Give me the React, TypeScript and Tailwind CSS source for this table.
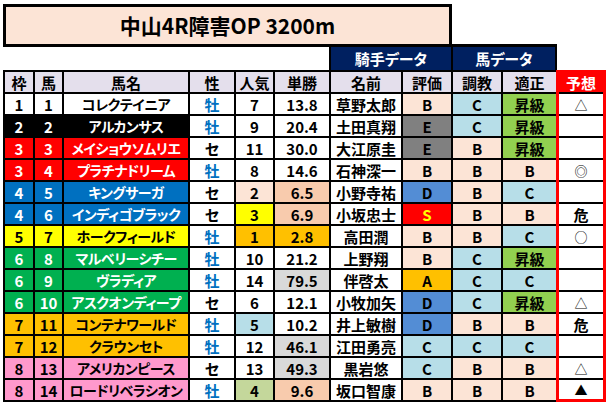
import React from "react"

type Horse = {
  w: number
  n: number
  name: string
  sex: string
  pop: number
  popBg: string
  odds: string
  oddsBg: string
  jockey: string
  hyoka: string
  chokyo: string
  tekisei: string
  yoso: string
}

const waku: Record<number, string> = {
  1: "bg-white text-black",
  2: "bg-black text-white",
  3: "bg-[#FF0000] text-white",
  4: "bg-[#0070C0] text-white",
  5: "bg-[#FFFF00] text-black",
  6: "bg-[#00B050] text-white",
  7: "bg-[#FFC000] text-black",
  8: "bg-[#FF99CC] text-black",
}

const grade: Record<string, string> = {
  A: "bg-[#FFC000]",
  B: "bg-[#FCE4D6]",
  C: "bg-[#B7DEE8]",
  D: "bg-[#538DD5]",
  E: "bg-[#808080]",
  S: "bg-[#FF0000] text-[#FFFF00]",
  昇級: "bg-[#92D050]",
}

const horses: Horse[] = [
  { w: 1, n: 1, name: "コレクテイニア", sex: "牡", pop: 7, popBg: "bg-white", odds: "13.8", oddsBg: "bg-white", jockey: "草野太郎", hyoka: "B", chokyo: "C", tekisei: "昇級", yoso: "△" },
  { w: 2, n: 2, name: "アルカンサス", sex: "牡", pop: 9, popBg: "bg-white", odds: "20.4", oddsBg: "bg-white", jockey: "土田真翔", hyoka: "E", chokyo: "C", tekisei: "昇級", yoso: "" },
  { w: 3, n: 3, name: "メイショウソムリエ", sex: "セ", pop: 11, popBg: "bg-white", odds: "30.0", oddsBg: "bg-white", jockey: "大江原圭", hyoka: "E", chokyo: "B", tekisei: "昇級", yoso: "" },
  { w: 3, n: 4, name: "プラチナドリーム", sex: "牡", pop: 8, popBg: "bg-white", odds: "14.6", oddsBg: "bg-white", jockey: "石神深一", hyoka: "B", chokyo: "B", tekisei: "B", yoso: "◎" },
  { w: 4, n: 5, name: "キングサーガ", sex: "セ", pop: 2, popBg: "bg-[#FCE4D6]", odds: "6.5", oddsBg: "bg-[#F8CBAD]", jockey: "小野寺祐", hyoka: "D", chokyo: "B", tekisei: "C", yoso: "" },
  { w: 4, n: 6, name: "インディゴブラック", sex: "セ", pop: 3, popBg: "bg-[#FFFF00]", odds: "6.9", oddsBg: "bg-[#F8CBAD]", jockey: "小坂忠士", hyoka: "S", chokyo: "B", tekisei: "B", yoso: "危" },
  { w: 5, n: 7, name: "ホークフィールド", sex: "牡", pop: 1, popBg: "bg-[#FFC000]", odds: "2.8", oddsBg: "bg-[#FFC000]", jockey: "高田潤", hyoka: "B", chokyo: "B", tekisei: "C", yoso: "○" },
  { w: 6, n: 8, name: "マルベリーシチー", sex: "牡", pop: 10, popBg: "bg-white", odds: "21.2", oddsBg: "bg-white", jockey: "上野翔", hyoka: "B", chokyo: "C", tekisei: "昇級", yoso: "" },
  { w: 6, n: 9, name: "ヴラディア", sex: "牡", pop: 14, popBg: "bg-white", odds: "79.5", oddsBg: "bg-[#D9D9D9]", jockey: "伴啓太", hyoka: "A", chokyo: "C", tekisei: "C", yoso: "" },
  { w: 6, n: 10, name: "アスクオンディープ", sex: "セ", pop: 6, popBg: "bg-white", odds: "12.1", oddsBg: "bg-white", jockey: "小牧加矢", hyoka: "D", chokyo: "C", tekisei: "昇級", yoso: "△" },
  { w: 7, n: 11, name: "コンテナワールド", sex: "牡", pop: 5, popBg: "bg-[#B7DEE8]", odds: "10.2", oddsBg: "bg-white", jockey: "井上敏樹", hyoka: "D", chokyo: "B", tekisei: "B", yoso: "危" },
  { w: 7, n: 12, name: "クラウンセト", sex: "牡", pop: 12, popBg: "bg-white", odds: "46.1", oddsBg: "bg-[#D9D9D9]", jockey: "江田勇亮", hyoka: "C", chokyo: "C", tekisei: "C", yoso: "" },
  { w: 8, n: 13, name: "アメリカンピース", sex: "セ", pop: 13, popBg: "bg-white", odds: "49.3", oddsBg: "bg-[#D9D9D9]", jockey: "黒岩悠", hyoka: "C", chokyo: "B", tekisei: "B", yoso: "△" },
  { w: 8, n: 14, name: "ロードリベラシオン", sex: "牡", pop: 4, popBg: "bg-[#C4D79B]", odds: "9.6", oddsBg: "bg-[#F8CBAD]", jockey: "坂口智康", hyoka: "B", chokyo: "B", tekisei: "B", yoso: "▲" },
]

const cell = "h-[22px] border-b-2 border-r-2 border-black flex items-center justify-center"
const last = "h-[22px] border-b-2 border-black flex items-center justify-center"
const head = "bg-[#E4DFEC]"

export default function App() {
  return (
    <div className="w-[610px] h-[407px] bg-white pt-[4px] pl-[3px] text-black font-bold text-[15px] leading-none font-['Noto_Sans_CJK_JP',sans-serif] [font-feature-settings:'palt']">
      {/* title */}
      <div className="w-[449px] h-[43px] border-[3px] border-black bg-[#FCE4D6] flex items-center justify-center text-[21px]">
        中山4R障害OP 3200m
      </div>

      {/* group headers */}
      <div className="flex -mt-[3px]">
        <div className="w-[326px]" />
        <div className="w-[122px] h-[26px] border-t-[3px] border-l-2 border-black bg-[#002060] text-white flex items-center justify-center">
          騎手データ
        </div>
        <div className="w-[106px] h-[26px] border-t-[3px] border-x-2 border-black bg-[#002060] text-white flex items-center justify-center">
          馬データ
        </div>
      </div>

      <div className="flex">
        <div className="grid grid-cols-[30px_29px_126px_46px_39px_56px_72px_50px_50px_53px] border-l-2 border-t-2 border-black">
          <div className={`${cell} ${head}`}>枠</div>
          <div className={`${cell} ${head}`}>馬</div>
          <div className={`${cell} ${head}`}>馬名</div>
          <div className={`${cell} ${head}`}>性</div>
          <div className={`${cell} ${head}`}>人気</div>
          <div className={`${cell} ${head}`}>単勝</div>
          <div className={`${cell} ${head}`}>名前</div>
          <div className={`${cell} ${head}`}>評価</div>
          <div className={`${cell} ${head}`}>調教</div>
          <div className={`${last} ${head}`}>適正</div>
          {horses.map((h) => (
            <React.Fragment key={h.n}>
              <div className={`${cell} ${waku[h.w]}`}>{h.w}</div>
              <div className={`${cell} ${waku[h.w]}`}>{h.n}</div>
              <div className={`${cell} ${waku[h.w]} whitespace-nowrap text-[14px] tracking-[-0.5px]`}>{h.name}</div>
              <div className={`${cell} bg-white ${h.sex === "牡" ? "text-[#0070C0]" : "text-black"}`}>{h.sex}</div>
              <div className={`${cell} ${h.popBg}`}>{h.pop}</div>
              <div className={`${cell} ${h.oddsBg}`}>{h.odds}</div>
              <div className={`${cell} bg-white`}>{h.jockey}</div>
              <div className={`${cell} ${grade[h.hyoka]}`}>{h.hyoka}</div>
              <div className={`${cell} ${grade[h.chokyo]}`}>{h.chokyo}</div>
              <div className={`${last} ${grade[h.tekisei]}`}>{h.tekisei}</div>
            </React.Fragment>
          ))}
        </div>

        {/* prediction column */}
        <div className="w-[50px] flex flex-col border-[3px] border-[#FF0000]">
          <div className="h-[21px] border-b-2 border-black bg-[#FF0000] text-white flex items-center justify-center">
            予想
          </div>
          {horses.map((h, i) => (
            <div
              key={h.n}
              className={
                i === horses.length - 1
                  ? "h-[19px] bg-white flex items-center justify-center"
                  : "h-[22px] border-b-2 border-black bg-white flex items-center justify-center"
              }
            >
              <span className={h.yoso === "危" ? "font-bold" : "font-normal text-[13px]"}>{h.yoso}</span>
            </div>
          ))}
        </div>
      </div>
    </div>
  )
}
